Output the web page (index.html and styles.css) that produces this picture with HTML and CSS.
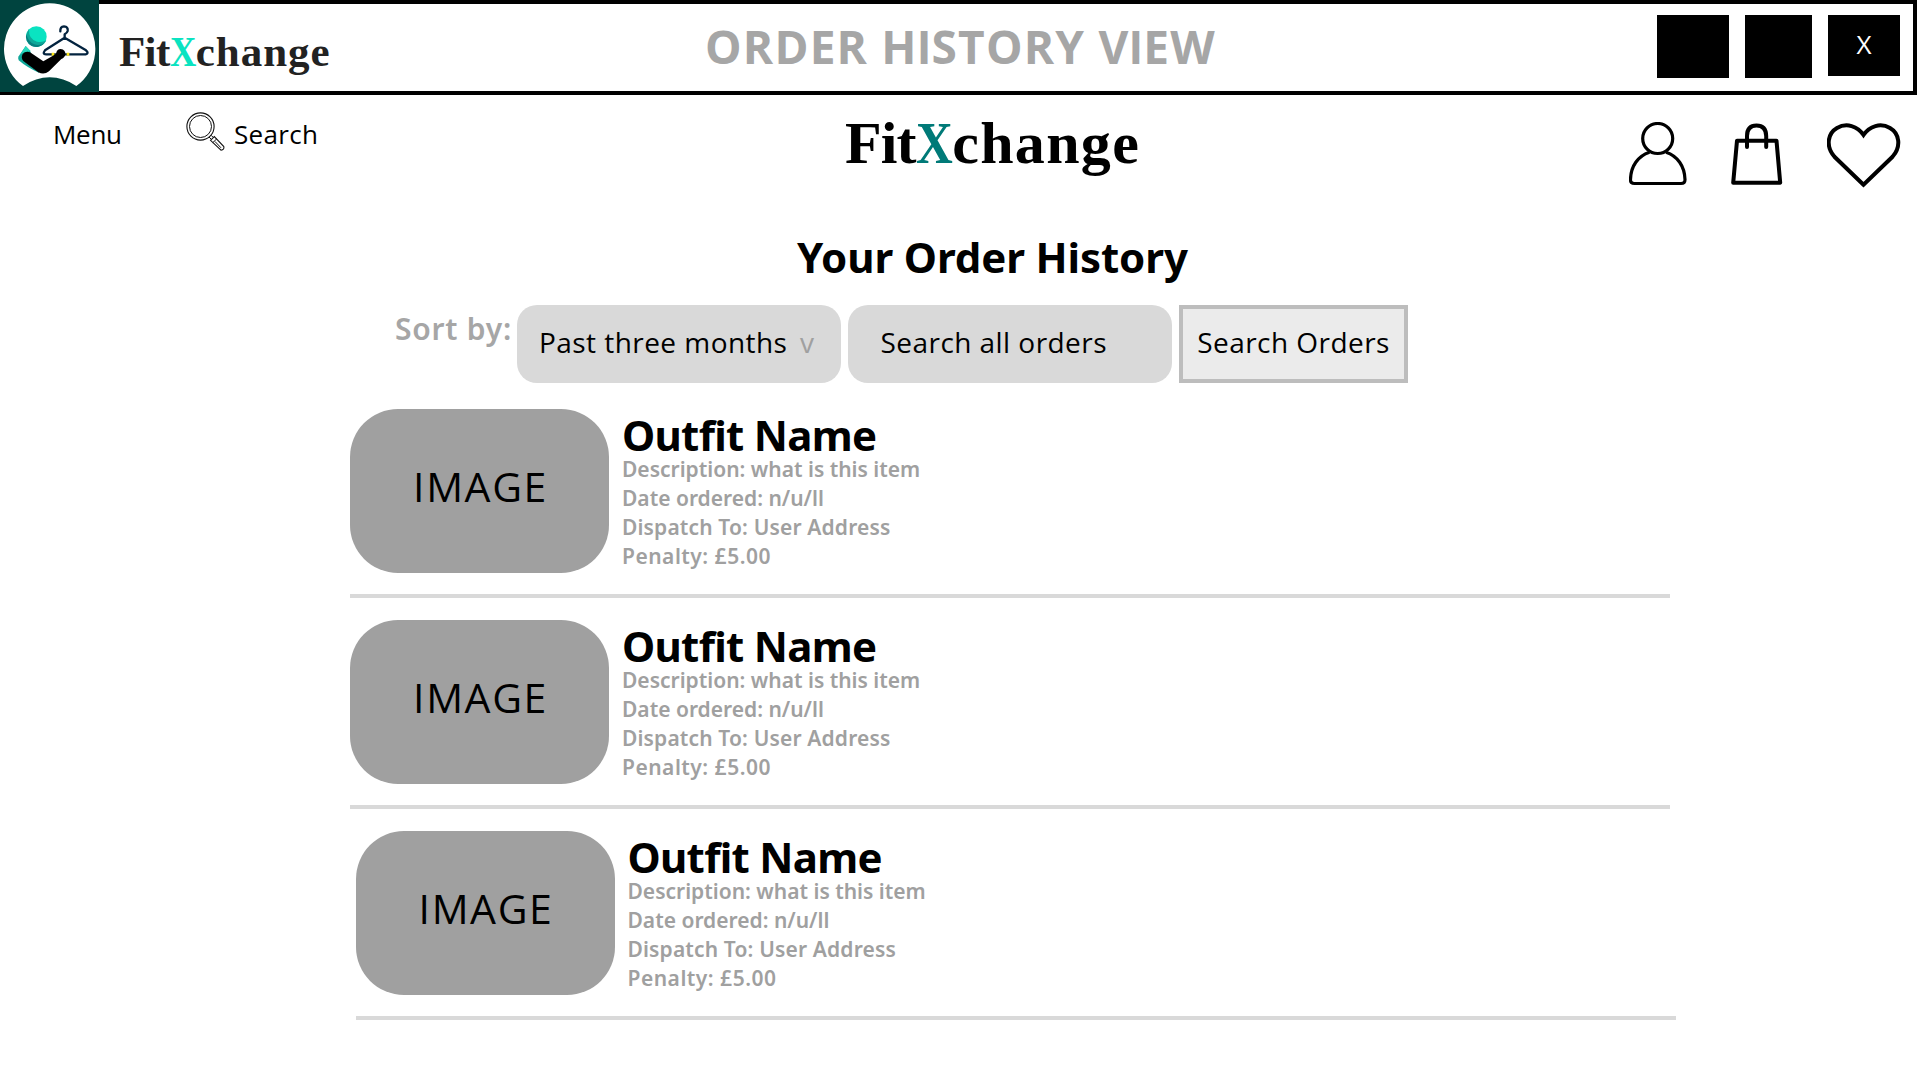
FILE: index.html
```
<!DOCTYPE html>
<html lang="en">
<head>
<meta charset="utf-8">
<title>FitXchange – Order History</title>
<link rel="stylesheet" href="styles.css">
</head>
<body>
<header class="titlebar">
  <svg class="logo" viewBox="0 0 297 276" aria-hidden="true">
    <rect width="297" height="276" fill="#00443f"/>
    <path d="M69 258A137 137 0 1 1 229 258Q190 232 149 232T69 258Z" fill="#fff"/>
    <circle cx="109" cy="110" r="31" fill="#0ae3c1"/>
    <path d="M87 88A31 31 0 1 0 139 121Q126 129 111 125Q85 118 87 88Z" fill="#0fa799"/>
    <path d="M79 101A31 31 0 0 0 134 128Q120 138 103 133Q83 124 79 101Z" fill="#087f7f"/>
    <path d="M77 138L90 152L118 219Q80 202 56 181Q52 176 56 169Z" fill="#0fa799"/>
    <path d="M77 138L92 153L68 158L60 166Z" fill="#27d9bd"/>
    <path d="M181 94Q180 80 192 79Q205 80 203 93Q201 99 194 103V113L135 151Q126 163 138 163H257Q268 160 258 151L194 113" fill="none" stroke="#03233f" stroke-width="7" stroke-linecap="round" stroke-linejoin="round"/>
    <path d="M155 163H163M200 163H208" stroke="#ffe617" stroke-width="9"/>
    <path d="M90 157L130 184L168 162Q170 147 182 147Q197 149 196 163Q195 173 184 177L147 214Q132 226 115 217L70 183Q62 174 68 162Q77 152 90 157Z" fill="#000"/>
  </svg>
  <div class="brand-small"><span class="fit">Fit</span><span class="x mint">X</span><span class="change">change</span></div>
  <div class="view-name">ORDER H<span class="stem">I</span>STORY V<span class="stem">I</span>EW</div>
  <div class="window-buttons">
    <span class="win win-min"></span>
    <span class="win win-max"></span>
    <span class="win win-close">X</span>
  </div>
</header>

<nav class="nav">
  <a class="nav-menu">Menu</a>
  <svg class="lens" viewBox="0 0 40 40" fill="none" stroke="#111">
    <circle cx="14.5" cy="14.5" r="13.6" stroke-width="1.1"/>
    <circle cx="14.5" cy="14.5" r="11" stroke-width="1"/>
    <path d="M23 25l2 2M25 23.200l2 2" stroke-width="1"/>
    <path d="M24.500 28.300L28.300 24.500L37.800 34.600Q38.600 37.600 35 38.200Z" stroke-width="1.100"/>
    <path d="M26.800 30.600L30.600 27M29 29.500l6 6.300" stroke-width="1"/>
  </svg>
  <a class="nav-search">Search</a>
  <div class="brand"><span class="fit">Fit</span><span class="x teal">X</span><span class="change">change</span></div>
  <div class="nav-icons">
    <svg class="icon-user" viewBox="0 0 58 64" fill="none" stroke="#000" stroke-width="3.200">
      <circle cx="28.700" cy="16.500" r="15"/>
      <path d="M20.500 30.200C9 34 1.800 44 1.500 57.500Q1.300 61.500 5.500 61.500H52Q56.200 61.500 56 57.500C55.600 44 48.500 34 37 30.200"/>
    </svg>
    <svg class="icon-bag" viewBox="0 0 52 64" fill="none" stroke="#000" stroke-width="4">
      <path d="M6 18.700H45.500L49.200 60.700H2.200Z" stroke-linejoin="round"/>
      <path d="M16 25V14Q16 3.500 25.500 3.500T35.200 14V25" stroke-linecap="round"/>
    </svg>
    <svg class="icon-heart" viewBox="0 0 74 66" fill="none" stroke="#000" stroke-width="4">
      <path d="M36.500 62.800L7.500 34.800C-1.500 24.500 .5 11.500 10 6C19.500 .5 30.500 4 36.500 13C42.500 4 53.500 .5 63 6C72.500 11.500 74.500 24.500 65.500 34.800Z"/>
    </svg>
  </div>
</nav>

<main class="content">
  <h1 class="page-title">Your Order History</h1>
  <div class="filters">
    <span class="sort-label">Sort by:</span>
    <div class="pill pill-range"><span class="range-text">Past three months</span><span class="caret">v</span></div>
    <div class="pill pill-search">Search all orders</div>
    <div class="search-button">Search Orders</div>
  </div>
  <section class="orders">
    <article class="order">
      <div class="thumb">IMAGE</div>
      <div class="details">
        <h2 class="outfit">Outfit Name</h2>
        <p class="line">Description: what is this item</p>
        <p class="line">Date ordered: n/u/ll</p>
        <p class="line address">Dispatch To: User Address</p>
        <p class="line penalty">Penalty: £5.00</p>
      </div>
    </article>
    <article class="order">
      <div class="thumb">IMAGE</div>
      <div class="details">
        <h2 class="outfit">Outfit Name</h2>
        <p class="line">Description: what is this item</p>
        <p class="line">Date ordered: n/u/ll</p>
        <p class="line address">Dispatch To: User Address</p>
        <p class="line penalty">Penalty: £5.00</p>
      </div>
    </article>
    <article class="order order-shifted">
      <div class="thumb">IMAGE</div>
      <div class="details">
        <h2 class="outfit">Outfit Name</h2>
        <p class="line">Description: what is this item</p>
        <p class="line">Date ordered: n/u/ll</p>
        <p class="line address">Dispatch To: User Address</p>
        <p class="line penalty">Penalty: £5.00</p>
      </div>
    </article>
  </section>
</main>
</body>
</html>
```
FILE: styles.css
```
* { box-sizing: border-box; }

body {
  margin: 0;
  width: 1920px;
  height: 1080px;
  overflow: hidden;
  background: #fff;
  color: #000;
  font-family: "Open Sans", "Noto Sans", sans-serif;
  white-space: nowrap;
}

/* Window title bar */
.titlebar {
  display: flex;
  align-items: flex-start;
  width: 1917px;
  height: 95px;
  border: solid #000;
  border-width: 4px 4px 4px 0;
}

.logo { width: 99px; height: 92px; margin-top: -4px; flex: none; }

.brand-small {
  width: 215px;
  margin: 23px 0 0 20px;
  font: 700 43px/50px "Liberation Serif", serif;
  color: #222;
}
.mint { color: #0ae3c1; }

/* Wordmark: tight "Fit", narrow X, open "change" */
.fit { letter-spacing: -0.015em; }
.x {
  display: inline-block;
  width: 0.61em;
  transform: scaleX(0.85);
  transform-origin: left;
}
.change { letter-spacing: 0.022em; }

.view-name {
  width: 520px;
  margin: 12px 0 0 371px;
  font-size: 46px;
  font-weight: 700;
  line-height: 60px;
  letter-spacing: 1.200px;
  color: #a6a6a6;
}
.stem { font-family: Inter, sans-serif; font-size: 0.980em; }

.window-buttons { display: flex; gap: 16px; margin: 11px 13px 0 auto; }
.win { width: 72px; height: 63px; background: #000; }
.win-max { width: 67px; }
.win-close {
  height: 61px;
  color: #fff;
  font-size: 26px;
  line-height: 58px;
  text-align: center;
}

/* Site navigation */
.nav {
  display: flex;
  align-items: flex-start;
  height: 132px;
  padding: 0 19px 0 53px;
  font-size: 26px;
  line-height: 40px;
}
.nav-menu { width: 133px; margin-top: 19px; letter-spacing: -0.300px; }
.lens { width: 40px; height: 40px; margin-top: 17px; }
.nav-search { width: 102px; margin: 19px 0 0 8px; letter-spacing: 0.300px; }
.brand {
  margin: 13px 0 0 509px;
  font: 700 60px/70px "Liberation Serif", serif;
}
.teal { color: #007a78; }
.nav-icons { display: flex; margin: 27px 0 0 auto; }
.icon-user { width: 58px; height: 64px; }
.icon-bag { width: 52px; height: 64px; margin-left: 44px; }
.icon-heart { width: 74px; height: 66px; margin-left: 44px; }

/* Order history */
.content { padding-left: 350px; }
.page-title {
  margin: 0 0 18px 447px;
  font-family: "Noto Sans", sans-serif;
  font-size: 42px;
  font-weight: 700;
  line-height: 60px;
  letter-spacing: -0.120px;
}

.filters { display: flex; align-items: flex-start; height: 104px; padding-left: 45px; }
.sort-label {
  width: 122px;
  margin-top: 4px;
  font-family: "Noto Sans", sans-serif;
  font-size: 30px;
  font-weight: 600;
  line-height: 40px;
  letter-spacing: 0.750px;
  color: #a6a6a6;
}
.pill {
  width: 324px;
  height: 77.5px;
  margin-right: 7px;
  border-radius: 20px;
  background: #d9d9d9;
  font-size: 28px;
  line-height: 75px;
  letter-spacing: 0.45px;
}
.pill-range { display: flex; padding-left: 22px; }
.range-text { width: 261px; }
.caret { color: #a0a0a0; }
.pill-search { padding-left: 32.500px; }
.search-button {
  width: 229px;
  height: 77.5px;
  border: 4px solid #bdbdbd;
  background: #ebebeb;
  font-size: 28px;
  line-height: 67px;
  letter-spacing: 0.45px;
  text-align: center;
}

.order {
  display: flex;
  width: 1320px;
  height: 189.300px;
  margin-bottom: 21.500px;
  border-bottom: 4px solid #d9d9d9;
}
.order-shifted { margin-left: 5.500px; }
.thumb {
  width: 259px;
  height: 164px;
  margin-right: 13px;
  padding-left: 2px;
  border-radius: 48px;
  background: #a0a0a0;
  font-size: 41px;
  line-height: 155px;
  letter-spacing: 1.600px;
  text-align: center;
}
.details { font-family: "Noto Sans", sans-serif; font-weight: 600; }
.outfit {
  margin: 0;
  padding-top: 5px;
  font-size: 42px;
  font-weight: 700;
  line-height: 41px;
  letter-spacing: -0.700px;
}
.line {
  margin: 0;
  font-size: 21px;
  line-height: 29px;
  color: #a0a0a0;
}
.address { letter-spacing: 0.150px; }
.penalty { letter-spacing: 0.500px; }
```
